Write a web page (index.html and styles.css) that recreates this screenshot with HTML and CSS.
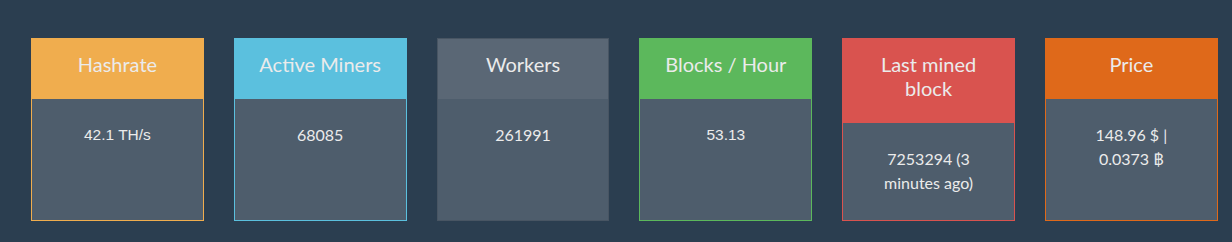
FILE: index.html
```html
<!DOCTYPE html>
<html lang="en">

<head>
    <meta charset="UTF-8">
    <meta name="viewport" content="width=device-width, initial-scale=1.0">
    <title>Pool Stats</title>
    <link rel="stylesheet" href="styles.css">
</head>

<body>
    <div class="stats">
        <div class="panel panel-warning">
            <div class="panel-heading">Hashrate</div>
            <div class="panel-body arial">42.1 TH/s</div>
        </div>
        <div class="panel panel-info">
            <div class="panel-heading">Active Miners</div>
            <div class="panel-body">68085</div>
        </div>
        <div class="panel panel-default">
            <div class="panel-heading">Workers</div>
            <div class="panel-body">261991</div>
        </div>
        <div class="panel panel-success">
            <div class="panel-heading">Blocks / Hour</div>
            <div class="panel-body arial">53.13</div>
        </div>
        <div class="panel panel-danger">
            <div class="panel-heading">Last mined block</div>
            <div class="panel-body">7253294 (3 minutes ago)</div>
        </div>
        <div class="panel panel-primary">
            <div class="panel-heading">Price</div>
            <div class="panel-body">148.96 $ | 0.0373 ฿</div>
        </div>
    </div>
</body>

</html>
```

FILE: styles.css
```css
body {
    margin: 0;
    background-color: #2b3e50;
    color: #ebebeb;
    font-family: Lato, "Open Sans", sans-serif;
}

.stats {
    display: flex;
    gap: 30px;
    padding: 38px 0 0 31px;
}

.panel {
    display: flex;
    flex-direction: column;
    box-sizing: border-box;
    width: 172.8px;
    height: 183px;
    background-color: #4e5d6c;
    border: 1px solid #485563;
}

.panel-heading {
    padding: 13px 12px 22px;
    font-size: 20px;
    line-height: 24px;
    text-align: center;
    border-bottom: 1px solid transparent;
}

.panel-body {
    flex: 1;
    padding: 24px 38px;
    font-size: 16px;
    line-height: 24px;
    text-align: center;
}

.arial {
    font-family: "Liberation Sans", Arial, sans-serif;
    font-size: 15.5px;
}

.panel-warning {
    border-color: #f0ad4e;
}

.panel-warning .panel-heading {
    background-color: #f0ad4e;
}

.panel-info {
    border-color: #5bc0de;
}

.panel-info .panel-heading {
    background-color: #5bc0de;
}

.panel-default .panel-heading {
    background-color: #5a6775;
}

.panel-success {
    border-color: #5cb85c;
}

.panel-success .panel-heading {
    background-color: #5cb85c;
}

.panel-danger {
    border-color: #d9534f;
}

.panel-danger .panel-heading {
    background-color: #d9534f;
}

.panel-primary {
    border-color: #df691a;
}

.panel-primary .panel-heading {
    background-color: #df691a;
}
```
